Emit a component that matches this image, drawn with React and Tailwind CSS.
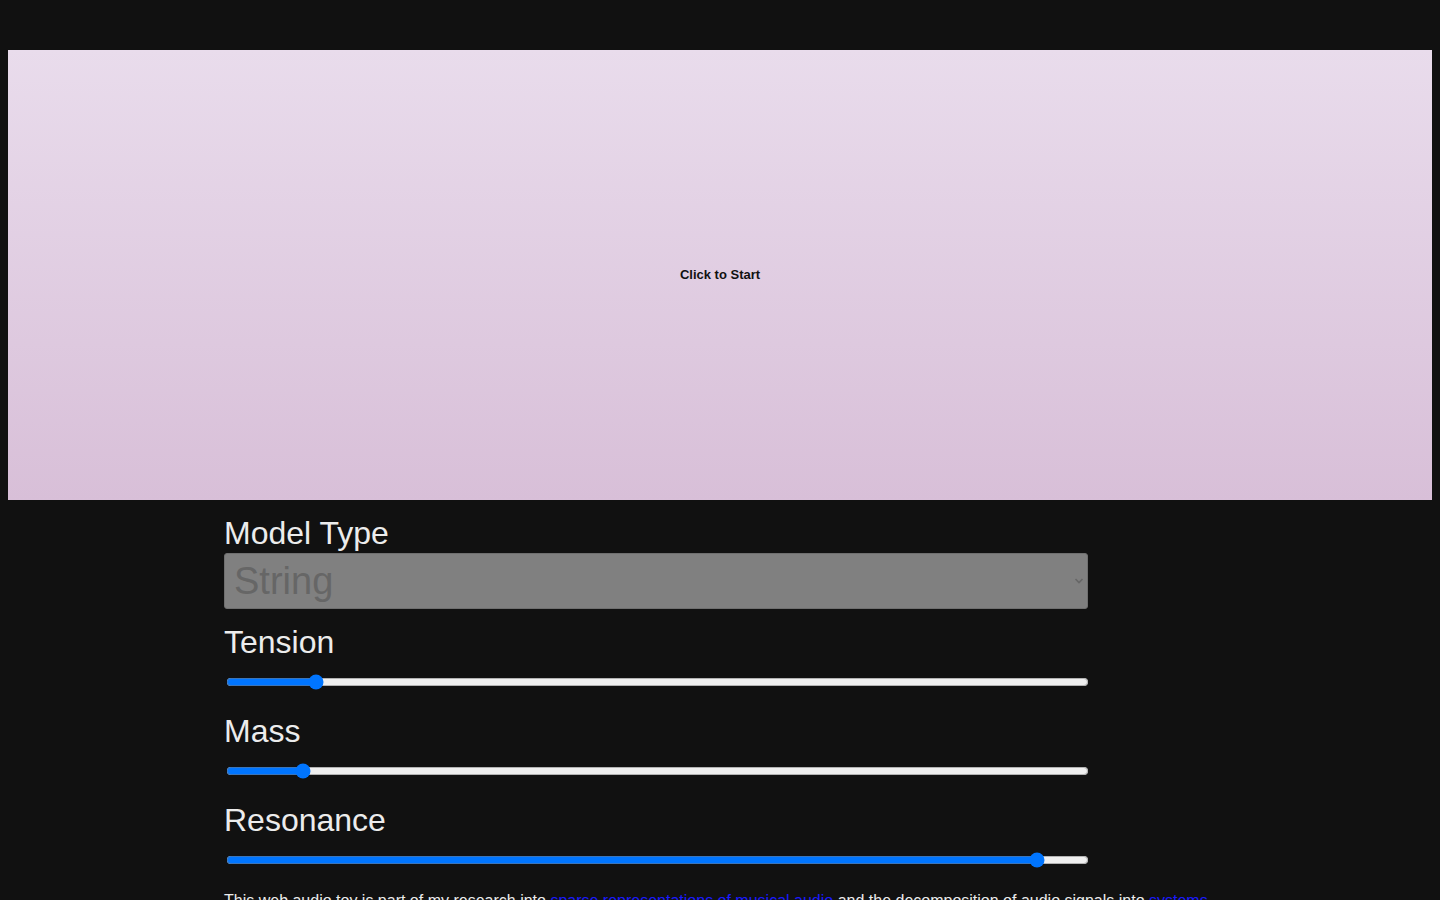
import React from "react";

function Slider({ label, value }) {
  return (
    <div className="flex flex-col">
      <div className="text-[32px] leading-[37px] text-[#ececec]">{label}</div>
      <input
        type="range"
        min="0"
        max="1000"
        defaultValue={value}
        className="mt-[13px] mb-[23px] ml-[2px] block h-4 w-[863px]"
      />
    </div>
  );
}

export default function App() {
  return (
    <div
      className="min-h-screen bg-[#111111] px-2 pt-[50px]"
      style={{ fontFamily: '"Liberation Sans", Arial, sans-serif' }}
    >
      <div className="flex h-[450px] w-full items-center justify-center bg-gradient-to-b from-[#e9dcec] to-[#d8bfd8]">
        <span className="text-[13px] font-bold text-[#111]">Click to Start</span>
      </div>
      <div className="mx-auto mt-[15px] w-[992px]">
        <div className="w-[864px]">
          <div className="text-[32px] leading-[37px] text-[#ececec]">Model Type</div>
          <div className="relative mt-[1px] h-[56px] w-[864px] rounded-[3px] border border-[#6f6f6f] bg-[#808080]">
            <select
              disabled
              className="h-full w-full appearance-none bg-transparent pl-[9px] text-[38px] leading-[54px] text-[#666666] outline-none"
              style={{ fontFamily: '"Liberation Sans", Arial, sans-serif' }}
            >
              <option>String</option>
              <option>Membrane</option>
              <option>Plate</option>
            </select>
            <svg
              className="pointer-events-none absolute right-[3px] top-[23px]"
              width="10"
              height="8"
              viewBox="0 0 10 8"
              fill="none"
            >
              <path d="M1.5 2l3.5 3.5L8.5 2" stroke="#666" strokeWidth="1.6" />
            </svg>
          </div>
          <div className="mt-[15px]">
            <Slider label="Tension" value={97} />
            <Slider label="Mass" value={81} />
            <Slider label="Resonance" value={948} />
          </div>
        </div>
        <p className="mt-[1px] text-base leading-[18px] text-[#ececec]">
          This web audio toy is part of my research into{" "}
          <a href="#" className="text-[#1a1aff] underline">
            sparse representations of musical audio
          </a>{" "}
          and the decomposition of audio signals into{" "}
          <a href="#" className="text-[#1a1aff] underline">
            systems
          </a>{" "}
          and the sources that excite them. Choose a model type, adjust the physical parameters and click the canvas to hear the result.
        </p>
      </div>
    </div>
  );
}
